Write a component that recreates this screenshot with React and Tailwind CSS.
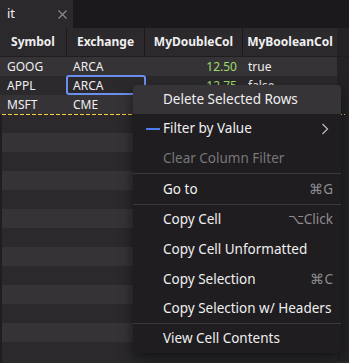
import React from "react";

const rowsData = [
  { s: "GOOG", e: "ARCA", d: "12.50", b: "true" },
  { s: "APPL", e: "ARCA", d: "12.75", b: "false" },
  { s: "MSFT", e: "CME", d: "", b: "" },
];

function Item({ children, right, disabled, active, sep, h = "h-[30px]", marker }) {
  return (
    <div
      className={`relative flex items-center ${h} pl-[30px] pr-[8px] ${sep ? "border-t border-[#3a383b]" : ""} ${active ? "bg-[#363437] rounded-t-[4px]" : ""} ${disabled ? "text-[#78767a]" : "text-[#f0eff0]"}`}
    >
      {marker && <div className="absolute left-[13px] top-1/2 w-[14px] h-[2px] -translate-y-1/2 bg-[#4c7dee]" />}
      <span className="flex-1">{children}</span>
      {right}
    </div>
  );
}

export default function App() {
  const stripes = Array.from({ length: 13 });
  return (
    <div
      className="w-[349px] h-[363px] overflow-hidden bg-[#2b292c] relative text-[13px]"
      style={{ fontFamily: '"Noto Sans", "Open Sans", sans-serif' }}
    >
      {/* tab bar */}
      <div className="flex h-[28px] bg-[#1b191c]">
        <div className="w-[73px] bg-[#2b292c] flex items-center pl-[7px] pr-[6px] text-[#f0eff0] text-[13px]">
          <span className="flex-1">it</span>
          <svg width="9" height="9" viewBox="0 0 9 9" className="text-[#8e8c8f]">
            <path d="M0.5 0.5L8.5 8.5M8.5 0.5L0.5 8.5" stroke="currentColor" strokeWidth="1.1" />
          </svg>
        </div>
      </div>
      {/* header */}
      <div className="flex h-[29px] bg-[#2b292c] border-b border-[#1f1d20] text-[12px] font-bold text-[#f0eff0]">
        <div className="w-[67px] flex items-center justify-center border-r border-[#1b191c]">Symbol</div>
        <div className="w-[78px] flex items-center justify-center border-r border-[#1b191c]">Exchange</div>
        <div className="w-[98px] flex items-center justify-center border-r border-[#1b191c]">MyDoubleCol</div>
        <div className="w-[94px] flex items-center justify-center">MyBooleanCol</div>
        <div className="flex-1 bg-[#242225]" />
      </div>
      {/* rows */}
      <div className="flex">
        <div className="w-[337px] text-[12px] text-[#f0eff0]">
          {rowsData.map((r, i) => (
            <div key={i} className={`flex h-[19px] items-center ${i % 2 === 0 ? "bg-[#353336]" : "bg-[#2b292c]"}`}>
              <div className="w-[67px] pl-[7px]">{r.s}</div>
              <div className="w-[78px] pl-[6px] relative h-full flex items-center">
                {r.e}
                {i === 1 && <div className="absolute left-[-1px] right-[-1px] top-[-1px] bottom-0 border-2 border-[#6b8fef] rounded-[3px]" />}
              </div>
              <div className="w-[98px] pr-[6px] text-right text-[#9fdc6c]">{r.d}</div>
              <div className="w-[94px] pl-[5px]">{r.b}</div>
            </div>
          ))}
          <div className="ml-[2px]">
            {stripes.map((_, i) => (
              <div key={i} className={`h-[19px] ${i % 2 === 0 ? "bg-[#2b292c]" : "bg-[#353336]"}`} />
            ))}
          </div>
        </div>
        <div className="flex-1 bg-[#242225]" />
      </div>
      <div
        className="absolute left-[2px] right-[4px] top-[114px] h-[1px]"
        style={{ backgroundImage: "repeating-linear-gradient(90deg,#f5cf3c 0 4px,transparent 4px 6px)" }}
      />
      <div className="absolute left-0 top-[115px] bottom-0 w-[2px] bg-[#1f1d20]" />

      {/* context menu */}
      <div className="absolute left-[133px] top-[85px] w-[208px] bg-[#1f1d20] rounded-[4px] shadow-[0_6px_14px_rgba(0,0,0,0.55)] text-[13.5px]">
        <Item active h="h-[29px]">Delete Selected Rows</Item>
        <Item h="h-[29px]" marker right={
          <svg width="8" height="12" viewBox="0 0 8 12" className="mr-[4px] text-[#bdbbbe]">
            <path d="M1.5 1L6.5 6L1.5 11" stroke="currentColor" strokeWidth="1.2" fill="none" />
          </svg>
        }>Filter by Value</Item>
        <Item h="h-[30px]" disabled>Clear Column Filter</Item>
        <Item sep h="h-[31px]" right={<span className="text-[#8e8c8f]">⌘G</span>}>Go to</Item>
        <Item sep h="h-[30px]" right={<span className="text-[#8e8c8f]">⌥Click</span>}>Copy Cell</Item>
        <Item h="h-[30px]">Copy Cell Unformatted</Item>
        <Item h="h-[30px]" right={<span className="text-[#8e8c8f]">⌘C</span>}>Copy Selection</Item>
        <Item h="h-[29px]">Copy Selection w/ Headers</Item>
        <Item sep h="h-[30px]">View Cell Contents</Item>
      </div>
    </div>
  );
}
